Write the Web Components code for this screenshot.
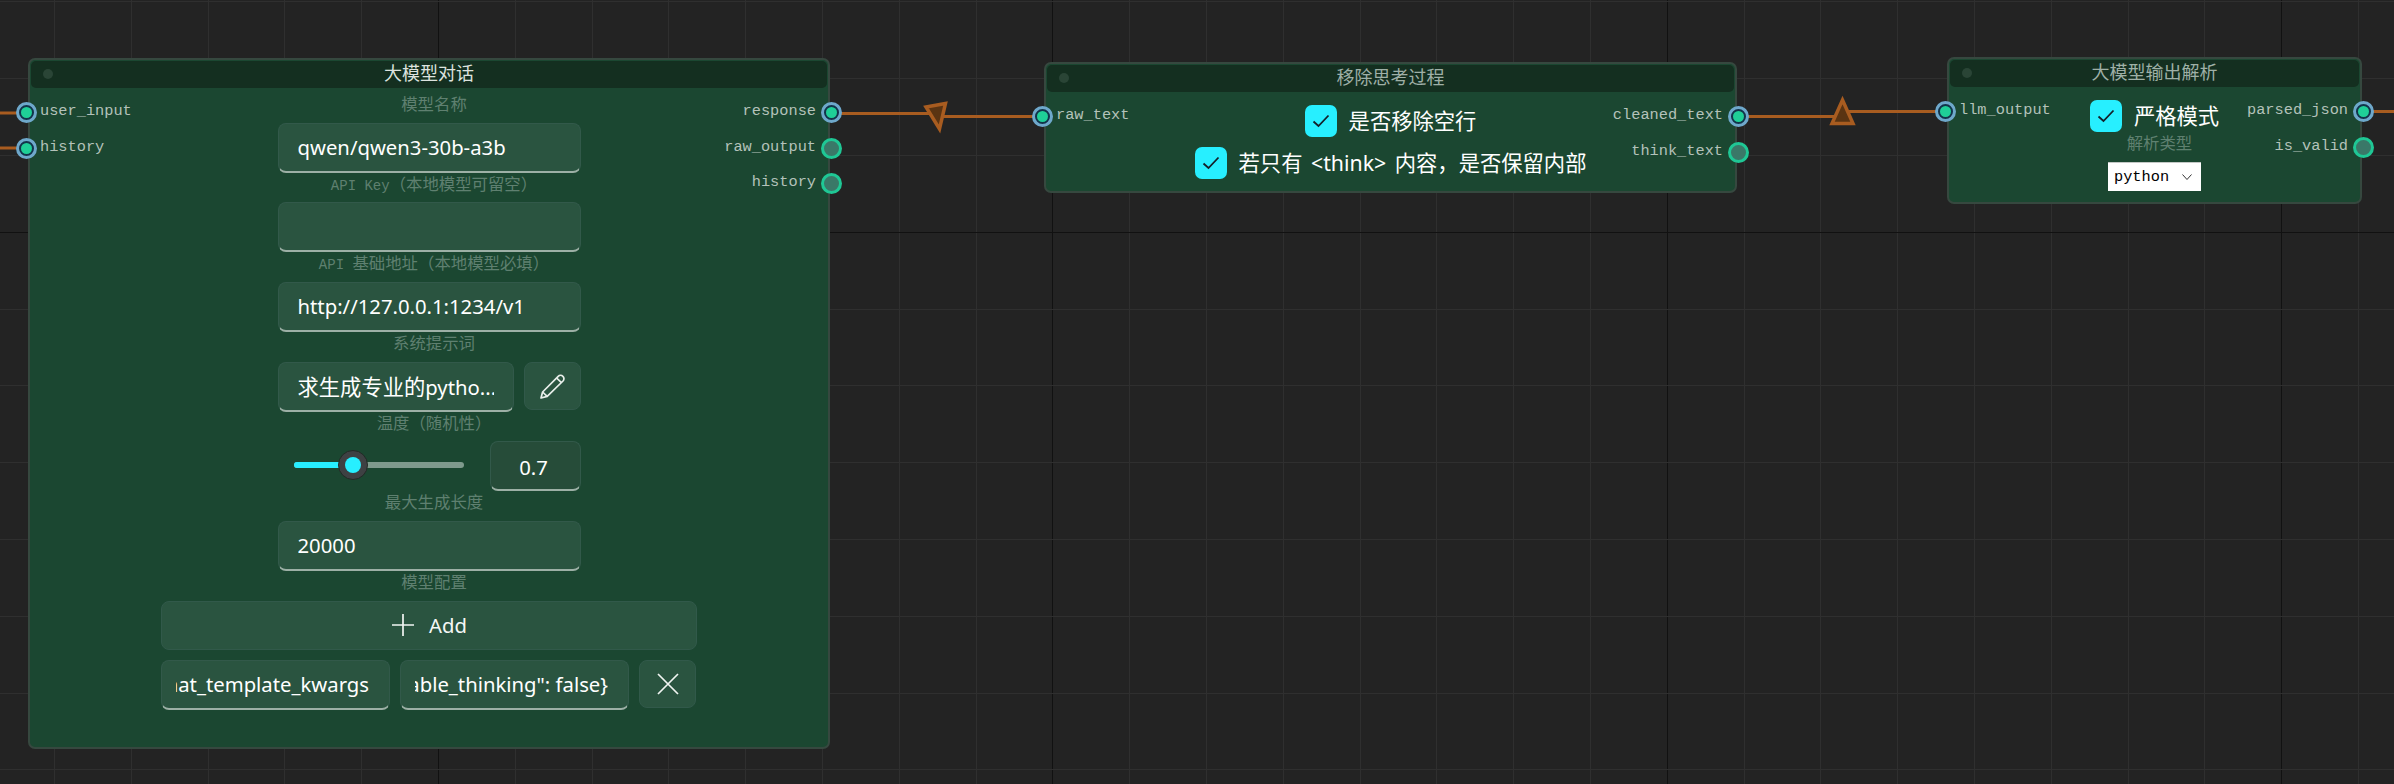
<!DOCTYPE html>
<html lang="zh">
<head>
<meta charset="utf-8">
<title>Node graph</title>
<style>
    html, body { margin: 0; padding: 0; width: 2394px; height: 784px; overflow: hidden; background: #232323; }
    body { font-family: "Noto Sans", "Noto Sans CJK SC", sans-serif; }
    graph-node.chat { left: 28px; top: 58px; width: 802px; height: 691px; }
    graph-node.think { left: 1044px; top: 62px; width: 693px; height: 131px; }
    graph-node.parse { left: 1947px; top: 57px; width: 415px; height: 147px; }
    .cjk { font-size: 21.3px; }
</style>
</head>
<body>
<graph-canvas>
    <graph-wires></graph-wires>

    <graph-node class="chat" heading="大模型对话" bright>
        <node-port slot="in" name="user_input" linked></node-port>
        <node-port slot="in" name="history" linked></node-port>
        <node-field label="模型名称"><text-box>qwen/qwen3-30b-a3b</text-box></node-field>
        <node-field label="API Key（本地模型可留空）"><text-box></text-box></node-field>
        <node-field label="API 基础地址（本地模型必填）"><text-box>http://127.0.0.1:1234/v1</text-box></node-field>
        <node-field label="系统提示词">
            <div style="display:flex;gap:10px;width:303px">
                <text-box style="width:236px"><span class="cjk">求生成专业的</span>pytho...</text-box>
                <icon-button icon="pencil" style="width:57px"></icon-button>
            </div>
        </node-field>
        <node-field label="温度（随机性）"><value-slider value="0.7"></value-slider></node-field>
        <node-field label="最大生成长度"><text-box>20000</text-box></node-field>
        <node-field label="模型配置"><icon-button icon="plus" style="width:536px;height:49px">Add</icon-button></node-field>
        <div style="display:flex;gap:10px;width:536px;margin-top:10px">
            <text-box style="width:229px" tail>chat_template_kwargs</text-box>
            <text-box style="width:229px" tail>{"enable_thinking": false}</text-box>
            <icon-button icon="cross" style="width:57px;height:48px"></icon-button>
        </div>
        <node-port slot="out" name="response" linked></node-port>
        <node-port slot="out" name="raw_output"></node-port>
        <node-port slot="out" name="history"></node-port>
    </graph-node>

    <graph-node class="think" heading="移除思考过程">
        <node-port slot="in" name="raw_text" linked></node-port>
        <check-row>是否移除空行</check-row>
        <check-row style="margin-top:10px">若只有 &lt;think&gt; 内容，是否保留内部</check-row>
        <node-port slot="out" name="cleaned_text" linked></node-port>
        <node-port slot="out" name="think_text"></node-port>
    </graph-node>

    <graph-node class="parse" heading="大模型输出解析">
        <node-port slot="in" name="llm_output" linked></node-port>
        <check-row>严格模式</check-row>
        <node-field label="解析类型"><combo-box>python</combo-box></node-field>
        <node-port slot="out" name="parsed_json" linked></node-port>
        <node-port slot="out" name="is_valid"></node-port>
    </graph-node>
</graph-canvas>

<script>
// fondo con la rejilla, los nodos van encima
class GraphCanvas extends HTMLElement {
    constructor() {
        super();
        this.attachShadow({ mode: 'open' });
        let lines = '';
        for (let k = 0; k < 32; k++) {
            const x = Math.round(54 + 76.8 * k) + 0.5;
            const major = (k % 8) === 5;
            lines += `<line x1="${x}" y1="0" x2="${x}" y2="784" stroke="${major ? '#111' : '#2f2f2f'}"></line>`;
        }
        for (let k = 0; k < 11; k++) {
            const y = Math.round(1.4 + 76.8 * k) + 0.5;
            const major = k === 3;
            lines += `<line x1="0" y1="${y}" x2="2394" y2="${y}" stroke="${major ? '#111' : '#2f2f2f'}"></line>`;
        }
        this.shadowRoot.innerHTML = `
            <style>
                :host {
                    display: block;
                    position: relative;
                    width: 2394px;
                    height: 784px;
                    overflow: hidden;
                    background: #232323;
                }
                svg { position: absolute; left: 0; top: 0; }
            </style>
            <svg width="2394" height="784" viewBox="0 0 2394 784" shape-rendering="crispEdges">${lines}</svg>
            <slot></slot>
        `;
    }
}

class GraphWires extends HTMLElement {
    constructor() {
        super();
        this.attachShadow({ mode: 'open' });
        this.shadowRoot.innerHTML = `
            <style>
                :host { position: absolute; left: 0; top: 0; width: 2394px; height: 784px; }
                svg { display: block; }
                line { stroke: #a85c20; stroke-width: 3; }
                polygon { stroke: #a85c20; stroke-width: 3.5; fill: #5a3412; stroke-linejoin: miter; }
            </style>
            <svg width="2394" height="784" viewBox="0 0 2394 784">
                <line x1="0" y1="113" x2="20" y2="113"></line>
                <line x1="0" y1="148" x2="20" y2="148"></line>
                <line x1="832" y1="113.5" x2="935" y2="113.5"></line>
                <line x1="935" y1="116.5" x2="1042" y2="116.5"></line>
                <polygon points="926,107 945.5,103.5 939.5,129"></polygon>
                <line x1="1739" y1="116.5" x2="1842" y2="116.5"></line>
                <line x1="1842" y1="111.5" x2="1946" y2="111.5"></line>
                <polygon points="1842.5,100 1853,123.5 1832,123.5"></polygon>
                <line x1="2363" y1="111.5" x2="2394" y2="111.5"></line>
            </svg>
        `;
    }
}

class GraphNode extends HTMLElement {
    constructor() {
        super();
        this.attachShadow({ mode: 'open' });
        const titleColor = this.hasAttribute('bright') ? '#dde3df' : '#9fb0a7';
        this.shadowRoot.innerHTML = `
            <style>
                :host {
                    position: absolute;
                    display: flex;
                    flex-direction: column;
                    box-sizing: border-box;
                    background: #1b4731;
                    border: 2px solid #36483f;
                    border-radius: 7px;
                }
                .header {
                    flex: none;
                    position: relative;
                    height: 27px;
                    margin: 1px 1px 0;
                    border-radius: 5px;
                    background: #142f20;
                    color: ${titleColor};
                    font: 18px/22px "Noto Sans CJK SC", sans-serif;
                    text-align: center;
                }
                .dot {
                    position: absolute;
                    left: 12px;
                    top: 8px;
                    width: 10px;
                    height: 10px;
                    border-radius: 50%;
                    background: #2a4536;
                }
                .body {
                    flex: 1;
                    display: grid;
                    grid-template-columns: 1fr auto 1fr;
                }
                .ports { display: flex; flex-direction: column; padding-top: 7px; }
                .ports.right { align-items: flex-end; }
                .center {
                    display: flex;
                    flex-direction: column;
                    align-items: center;
                    padding-top: var(--center-top, 13px);
                }
            </style>
            <div class="header"><span class="dot"></span>${this.getAttribute('heading') || ''}</div>
            <div class="body">
                <div class="ports"><slot name="in"></slot></div>
                <div class="center"><slot></slot></div>
                <div class="ports right"><slot name="out"></slot></div>
            </div>
        `;
        if (this.classList.contains('chat')) {
            this.style.setProperty('--center-top', '5px');
        }
    }
}

class NodePort extends HTMLElement {
    constructor() {
        super();
        this.attachShadow({ mode: 'open' });
        const side = this.getAttribute('slot');
        const linked = this.hasAttribute('linked');
        this.shadowRoot.innerHTML = `
            <style>
                :host {
                    display: flex;
                    align-items: center;
                    height: 35.5px;
                    flex-direction: ${side === 'out' ? 'row-reverse' : 'row'};
                    margin-${side === 'out' ? 'right' : 'left'}: -14px;
                    gap: ${side === 'out' ? '5px' : '3px'};
                }
                .dot {
                    flex: none;
                    box-sizing: border-box;
                    width: 21px;
                    height: 21px;
                    border-radius: 50%;
                    display: grid;
                    place-items: center;
                    border: 3px solid ${linked ? '#6ea8cb' : '#1fc795'};
                    background: ${linked ? '#12344a' : '#3a7868'};
                }
                .dot i {
                    display: ${linked ? 'block' : 'none'};
                    width: 11px;
                    height: 11px;
                    border-radius: 50%;
                    background: #1fcf97;
                }
                .name {
                    color: #b4c2ba;
                    font: 15.3px/20px "Liberation Mono", monospace;
                    padding-bottom: 3px;
                }
            </style>
            <span class="dot"><i></i></span>
            <span class="name">${this.getAttribute('name')}</span>
        `;
    }
}

class NodeField extends HTMLElement {
    constructor() {
        super();
        this.attachShadow({ mode: 'open' });
        // las letras latinas de la etiqueta son mas pequenas que los caracteres CJK
        const label = this.getAttribute('label').replace(/[A-Za-z ]+/g, m => `<span class="latin">${m}</span>`);
        this.shadowRoot.innerHTML = `
            <style>
                :host { display: flex; flex-direction: column; align-items: center; }
                .label {
                    height: 20px;
                    margin: 0 0 9.7px;
                    padding-left: 10px;
                    color: #5f8070;
                    font: 16.4px/20px "Noto Sans CJK SC", monospace;
                    white-space: pre;
                }
                .latin { font: 14px/20px "Liberation Mono", monospace; }
            </style>
            <div class="label">${label}</div>
            <slot></slot>
        `;
    }
}

class TextBox extends HTMLElement {
    constructor() {
        super();
        this.attachShadow({ mode: 'open' });
        // tail: el texto es mas largo que la caja y se ve solo el final
        const tail = this.hasAttribute('tail');
        this.shadowRoot.innerHTML = `
            <style>
                :host {
                    display: block;
                    box-sizing: border-box;
                    width: 303px;
                    height: 50px;
                    padding: ${tail ? '0 20px 0 14px' : '0 19px 0 19px'};
                    background: #2a5440;
                    border: 1px solid #32594a;
                    border-bottom: 2px solid #9db0a6;
                    border-radius: 8px;
                    color: #fff;
                    font: 20.3px/47px "Noto Sans", "Noto Sans CJK SC", sans-serif;
                }
                .clip {
                    display: flex;
                    height: 47px;
                    justify-content: ${tail ? 'flex-end' : 'flex-start'};
                    overflow: hidden;
                    white-space: nowrap;
                }
                .clip span { flex: none; }
            </style>
            <div class="clip"><span><slot></slot></span></div>
        `;
    }
}

const ICONS = {
    pencil: `<svg width="26" height="26" viewBox="0 0 26 26" fill="none" stroke="#e9efeb" stroke-width="1.7" stroke-linejoin="round">
        <path d="M2 25 L3.6 19 L19.2 3.4 A3.2 3.2 0 0 1 24 8 L8.2 23.4 Z"></path>
        <path d="M17.6 5 L22.4 9.6"></path>
        <path d="M3.6 19 L8.2 23.4"></path>
    </svg>`,
    plus: `<svg width="24" height="24" viewBox="0 0 24 24" stroke="#f1f5f2" stroke-width="1.7"><path d="M12 1 V23 M1 12 H23"></path></svg>`,
    cross: `<svg width="24" height="24" viewBox="0 0 24 24" stroke="#f1f5f2" stroke-width="1.7"><path d="M2 2 L22 22 M22 2 L2 22"></path></svg>`
};

class IconButton extends HTMLElement {
    constructor() {
        super();
        this.attachShadow({ mode: 'open' });
        this.shadowRoot.innerHTML = `
            <style>
                :host {
                    display: flex;
                    align-items: center;
                    justify-content: center;
                    gap: 14px;
                    box-sizing: border-box;
                    height: 48px;
                    background: #2a5440;
                    border: 1px solid #31594a;
                    border-radius: 8px;
                    color: #f4f7f5;
                    font: 20.3px/24px "Noto Sans", sans-serif;
                }
                svg { display: block; }
            </style>
            ${ICONS[this.getAttribute('icon')]}
            <slot></slot>
        `;
    }
}

class ValueSlider extends HTMLElement {
    constructor() {
        super();
        this.attachShadow({ mode: 'open' });
        this.shadowRoot.innerHTML = `
            <style>
                :host {
                    display: flex;
                    align-items: center;
                    justify-content: space-between;
                    width: 303px;
                    height: 50px;
                }
                .track {
                    position: relative;
                    width: 170px;
                    height: 6px;
                    margin: -2px 0 0 16px;
                    border-radius: 3px;
                    background: #7f9a8d;
                }
                .fill {
                    position: absolute;
                    left: 0;
                    top: 0;
                    bottom: 0;
                    width: 59px;
                    border-radius: 3px 0 0 3px;
                    background: #27efff;
                }
                .thumb {
                    position: absolute;
                    left: 44px;
                    top: -12px;
                    box-sizing: border-box;
                    width: 30px;
                    height: 30px;
                    border-radius: 50%;
                    background: #3e4143;
                    border: 1.5px solid #222a26;
                    display: grid;
                    place-items: center;
                }
                .thumb i {
                    width: 16px;
                    height: 16px;
                    border-radius: 50%;
                    background: #27efff;
                }
                .value {
                    box-sizing: border-box;
                    width: 91px;
                    height: 50px;
                    text-align: center;
                    background: #264c39;
                    border: 1px solid #32594a;
                    border-bottom: 2px solid #9db0a6;
                    border-radius: 8px;
                    color: #fff;
                    font: 20.3px/50px "Noto Sans", sans-serif;
                    padding-right: 3px;
                }
            </style>
            <div class="track"><div class="fill"></div><div class="thumb"><i></i></div></div>
            <div class="value">${this.getAttribute('value')}</div>
        `;
    }
}

class CheckRow extends HTMLElement {
    constructor() {
        super();
        this.attachShadow({ mode: 'open' });
        this.shadowRoot.innerHTML = `
            <style>
                :host {
                    display: flex;
                    align-items: center;
                    gap: 12px;
                    color: #fff;
                    font: 21.3px/32px "Noto Sans", "Noto Sans CJK SC", sans-serif;
                    word-spacing: 3px;
                    white-space: pre;
                }
                .box {
                    flex: none;
                    width: 32px;
                    height: 32px;
                    border-radius: 7px;
                    background: #27efff;
                    display: grid;
                    place-items: center;
                }
                svg { display: block; }
            </style>
            <span class="box">
                <svg width="18" height="14" viewBox="0 0 18 14" fill="none" stroke="#14202a" stroke-width="1.8"><path d="M1.5 7.5 L6.5 12 L16.5 1.5"></path></svg>
            </span>
            <span><slot></slot></span>
        `;
    }
}

class ComboBox extends HTMLElement {
    constructor() {
        super();
        this.attachShadow({ mode: 'open' });
        this.shadowRoot.innerHTML = `
            <style>
                :host {
                    display: flex;
                    align-items: center;
                    justify-content: space-between;
                    box-sizing: border-box;
                    width: 93px;
                    height: 29px;
                    padding: 0 9px 0 6px;
                    background: #fff;
                    border-top: 1px solid #c4c8c6;
                    color: #000;
                    font: 15.3px/26px "Liberation Mono", monospace;
                }
                svg { display: block; }
            </style>
            <span><slot></slot></span>
            <svg width="10" height="6" viewBox="0 0 10 6" fill="none" stroke="#333" stroke-width="1"><path d="M0.5 0.5 L5 5.5 L9.5 0.5"></path></svg>
        `;
    }
}

customElements.define('graph-canvas', GraphCanvas);
customElements.define('graph-wires', GraphWires);
customElements.define('graph-node', GraphNode);
customElements.define('node-port', NodePort);
customElements.define('node-field', NodeField);
customElements.define('text-box', TextBox);
customElements.define('icon-button', IconButton);
customElements.define('value-slider', ValueSlider);
customElements.define('check-row', CheckRow);
customElements.define('combo-box', ComboBox);
</script>
</body>
</html>
